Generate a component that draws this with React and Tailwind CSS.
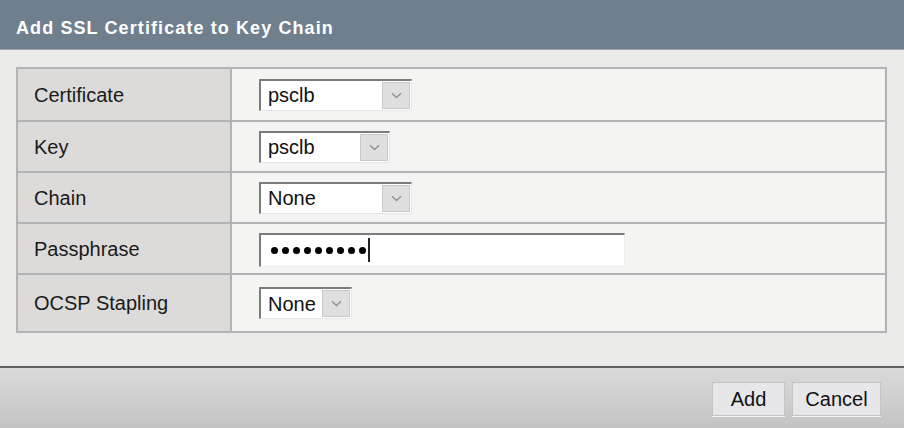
import React from "react";

function Chevron() {
  return (
    <svg width="11" height="7" viewBox="0 0 11 7" fill="none">
      <path d="M1 1.2 L5.5 5.5 L10 1.2" stroke="#8f8f8f" strokeWidth="1.3" />
    </svg>
  );
}

function Select({ value, width }) {
  return (
    <div
      className={`flex h-[32px] items-stretch border-t-2 border-l-2 border-r border-b border-t-[#7c7c7c] border-l-[#7c7c7c] border-r-[#e6e6e6] border-b-[#e6e6e6] bg-white ${width}`}
    >
      <div className="flex flex-1 items-center pl-[7px] text-[20px] leading-none text-[#111]">
        {value}
      </div>
      <div className="my-[1px] mr-[1px] flex w-[28px] items-center justify-center border border-[#c9c9c9] bg-[#dfdfdf]">
        <Chevron />
      </div>
    </div>
  );
}

function Row({ label, children, h, last }) {
  return (
    <div
      className={`flex ${h} ${last ? "" : "border-b-2 border-[#b3b3b3]"}`}
    >
      <div className="flex w-[214px] shrink-0 items-center border-r-2 border-[#b3b3b3] bg-[#dcdbd9] pl-[16px] text-[20px] text-[#1a1a1a]">
        {label}
      </div>
      <div className="flex flex-1 items-center bg-[#f4f4f2] pl-[27px]">
        {children}
      </div>
    </div>
  );
}

export default function App() {
  return (
    <div
      className="flex h-[428px] w-[904px] flex-col overflow-hidden"
      style={{ fontFamily: '"Liberation Sans", Arial, sans-serif' }}
    >
      <div className="flex h-[50px] shrink-0 items-center border-b border-[#9aa5af] bg-[#6f7f8e] pl-[16px] pt-[8px]">
        <span className="text-[18px] font-bold tracking-[1.1px] text-white">
          Add SSL Certificate to Key Chain
        </span>
      </div>
      <div className="flex-1 bg-[#ebebe9] px-[16px] pt-[17px]">
        <div className="w-[871px] border-2 border-[#b3b3b3]">
          <Row label="Certificate" h="h-[53px]">
            <Select value="psclb" width="w-[153px]" />
          </Row>
          <Row label="Key" h="h-[51px]">
            <Select value="psclb" width="w-[131px]" />
          </Row>
          <Row label="Chain" h="h-[51px]">
            <Select value="None" width="w-[153px]" />
          </Row>
          <Row label="Passphrase" h="h-[51px]">
            <div className="mt-[2px] flex h-[34px] w-[366px] items-center border-t-2 border-l-2 border-r border-b border-t-[#7c7c7c] border-l-[#7c7c7c] border-r-[#ececec] border-b-[#ececec] bg-white pl-[10px]">
              <div className="flex items-center gap-[4px]">
                {Array.from({ length: 9 }).map((_, i) => (
                  <span
                    key={i}
                    className="block h-[7px] w-[7px] rounded-full bg-black"
                  />
                ))}
              </div>
              <span className="ml-[2px] block h-[24px] w-[2px] bg-[#222]" />
            </div>
          </Row>
          <Row label="OCSP Stapling" h="h-[56px]" last>
            <Select value="None" width="w-[93px]" />
          </Row>
        </div>
      </div>
      <div className="flex h-[62px] shrink-0 items-center justify-end gap-[7px] border-t-2 border-[#5f5f5f] bg-gradient-to-b from-[#dadada] to-[#c4c4c4] pr-[23px] pt-[2px]">
        <button className="h-[34px] w-[73px] border border-[#c4c4c4] bg-[#e7e7e9] text-[20px] text-[#111] shadow-[0_1px_0_#f4f4f4]">
          Add
        </button>
        <button className="h-[34px] w-[89px] border border-[#c4c4c4] bg-[#e7e7e9] text-[20px] text-[#111] shadow-[0_1px_0_#f4f4f4]">
          Cancel
        </button>
      </div>
    </div>
  );
}
